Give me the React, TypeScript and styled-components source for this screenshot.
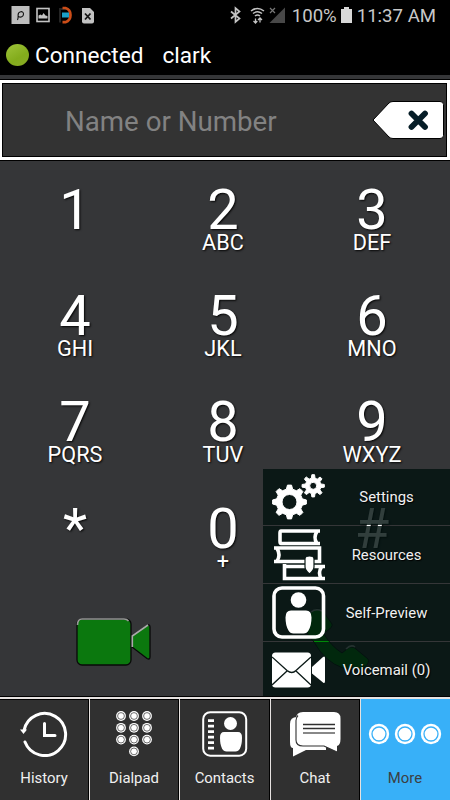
import React from "react";
import styled, { createGlobalStyle, css } from "styled-components";

const Global = createGlobalStyle`
  * { box-sizing: border-box; }
  body { margin: 0; background: #000; font-family: Roboto, "Liberation Sans", sans-serif; }
  svg { display: block; flex: none; }
`;

const Screen = styled.div`
  position: relative;
  width: 450px;
  height: 800px;
  overflow: hidden;
  display: flex;
  flex-direction: column;
  background: #353638;
  color: #fff;
`;

const StatusBar = styled.div`
  height: 32px;
  flex: none;
  background: #000;
  display: flex;
  align-items: center;
  justify-content: space-between;
  padding: 0 14px 2px 11px;
`;

const StatusIcons = styled.div`
  display: flex;
  align-items: center;
`;

const StatusText = styled.span<{ $gap: number }>`
  color: #c8c8c8;
  font-size: 18.6px;
  line-height: 32px;
  margin-left: ${(p) => p.$gap}px;
  white-space: nowrap;
  padding-top: 2px;
`;

const TitleBar = styled.div`
  height: 43px;
  flex: none;
  background: #000;
  display: flex;
  align-items: center;
  padding: 5px 0 0 6px;
  font-size: 22.6px;
  line-height: 28px;
`;

const Presence = styled.span`
  width: 23px;
  height: 22px;
  margin: 0 6px 2px 0;
  border-radius: 50%;
  background: linear-gradient(150deg, #9fc43a, #83ac1c 60%, #8aab25);
`;

const Account = styled.span`
  margin-left: 19px;
`;

const Field = styled.div`
  height: 80px;
  flex: none;
  margin-top: 5px;
  border: solid #fff;
  border-width: 3px 3px 3px 2px;
  outline: 1px solid #000;
  box-shadow: inset 0 0 0 1px #000;
  background: #333;
  display: flex;
  align-items: center;
  justify-content: space-between;
  padding: 0 2px 0 63px;
`;

const Placeholder = styled.span`
  color: #828282;
  font-size: 27.7px;
  line-height: 34px;
  padding-top: 3px;
`;

const Keypad = styled.div`
  flex: none;
  display: grid;
  grid-template-columns: 150px 146px 152px;
  grid-auto-rows: 106.2px;
`;

const Key = styled.div`
  display: flex;
  flex-direction: column;
  align-items: center;
  padding-top: 30px;
  text-shadow: 1px 1px 2px rgba(0, 0, 0, 0.9);
`;

const Digit = styled.span`
  font-size: 56px;
  line-height: 41px;
`;

const Letters = styled.span`
  font-size: 21.7px;
  line-height: 23px;
`;

const Calls = styled.div`
  display: flex;
  padding: 32px 0 0 76px;
  gap: 150px;
  height: 112px;
  flex: none;
`;

const PhoneWrap = styled.div`
  margin-top: -9px;
`;

const Menu = styled.div`
  position: absolute;
  left: 263px;
  right: 0;
  top: 469px;
  height: 228px;
  display: grid;
  grid-template-rows: 56px 57px 57px 55px;
  row-gap: 1px;
`;

const MenuItem = styled.div`
  background: rgba(1, 17, 15, 0.81);
  display: grid;
  grid-template-columns: 55px 119px;
  align-items: center;
  padding-left: 9px;
  text-align: center;
  font-size: 14.9px;
  color: #f1f1f1;
  text-shadow: 1px 1px 1px #000;
`;

const NavBar = styled.div`
  position: absolute;
  left: 0;
  right: 0;
  bottom: 0;
  height: 104px;
  border-top: 1px solid #000;
  background: #e6e2e0;
  display: grid;
  grid-template-columns: 89px 89px 90px 89px 89px;
  column-gap: 1px;
  padding-top: 2px;
`;

const Tab = styled.div<{ $active?: boolean }>`
  display: flex;
  flex-direction: column;
  align-items: center;
  border: solid #000;
  border-width: 1px 1px 0 0;
  background: #303030;
  font-size: 14.9px;
  color: #f0f0f0;
  ${(p) =>
    p.$active &&
    css`
      background: #38b0f8;
      color: #3c4043;
      border-color: #38b0f8;
    `}
`;

const TabIcon = styled.div`
  height: 67px;
  display: flex;
  align-items: center;
`;

const TabLabel = styled.span`
  line-height: 22px;
`;

const NotificationIcons = () => (
  <svg width="86" height="20" viewBox="0 0 86 20">
    <rect x="0.5" y="1" width="18" height="18" fill="#bdbdbd" />
    <path d="M6.500 15c1-2 .6-4 .6-5 0-4 5.400-4.500 5.400-1 0 2.800-3 3.800-5 2.500" fill="none" stroke="#111" strokeWidth="1.100" />
    <rect x="26" y="3.500" width="12" height="13" fill="none" stroke="#c4c4c4" strokeWidth="1.600" />
    <path d="M27.500 13.500v-3l2-1 1.500 1 1.500-2.500 2 2.500 2 .5v2.500z" fill="#c4c4c4" />
    <path d="M49 17.500V4h7" fill="none" stroke="#252525" strokeWidth="2" />
    <path d="M51.500 3h3q5 1.500 5 7t-5 7.200h-3" fill="none" stroke="#cc4d18" strokeWidth="2.700" />
    <path d="M51 7.500h7v5h-7z" fill="#1ba0c8" />
    <path d="M71 3h8l4 4v9.500q0 2-2 2h-8q-2 0-2-2z" fill="#c2c2c2" />
    <path d="M74 8.500l5.500 6m0-6l-5.500 6" stroke="#151515" strokeWidth="1.800" />
  </svg>
);

const SignalIcons = () => (
  <svg width="56" height="20" viewBox="0 0 56 20">
    <path d="M1 6.500l8.500 7-4 3.500V3l4 3.500L1 13.500" fill="none" stroke="#c4c4c4" strokeWidth="1.700" />
    <g fill="none" stroke="#c4c4c4" strokeWidth="1.500">
      <path d="M21 6q6.500-5 13 0M23 8.500q4.500-3.500 9 0M25 11q2.500-2 5 0" />
      <path d="M25.500 18v-4.500M30 13v4.500M23.500 16l2 2 1.800-2M28 15l2-2 2 2" strokeWidth="1.300" />
    </g>
    <path d="M55 2.500V18H39.500z" fill="#484848" />
    <path d="M40 3l5 5m0-5l-5 5" stroke="#777" strokeWidth="1.200" />
  </svg>
);

const Battery = () => (
  <svg width="15" height="16" viewBox="-4 0 15 16">
    <path d="M0 2h3V0h5v2h3v14H0z" fill="#d8d8d8" />
  </svg>
);

const Backspace = () => (
  <svg width="73" height="40" viewBox="0 0 73 40">
    <path d="M1 20L17 3q1.500-1.500 4-1.500h47q3.500 0 3.500 3v31q0 3-3.500 3H21q-2.500 0-4-1.500z" fill="#fff" stroke="#000" strokeWidth="1" />
    <path d="M39.500 13.500L53 27M53 13.500L39.500 27" stroke="#061d27" strokeWidth="5.800" strokeLinecap="round" />
  </svg>
);

const VideoCall = () => (
  <svg width="77" height="50" viewBox="0 0 77 50">
    <rect x="1" y="2" width="54" height="46" rx="5" fill="#0b780e" stroke="#090909" strokeWidth="1.300" />
    <path d="M1.500 8Q1.500 2 6 2H48q3 0 4.500 2" fill="none" stroke="#999" strokeWidth="1.600" />
    <path d="M56 19L71 8.500q3-1.500 3 1.500v30q0 3-3 1.500L56 30z" fill="#0b780e" stroke="#090909" strokeWidth="1.300" />
    <path d="M56.300 30V19L72 8" fill="none" stroke="#aaa" strokeWidth="1.600" />
  </svg>
);

const VoiceCall = () => (
  <svg width="68" height="64" viewBox="0 0 68 64">
    <path d="M3 20C3 8 8 1 16 1Q20 1 22 6L29 16Q30 19 24 23L21 26Q28 38 39 45L44 41Q49 37 53 41L65 51Q67 54 62 59Q55 64 40 60Q22 54 11 34Q3 26 3 20Z" fill="#008b08" stroke="#111" />
    <path d="M8 4q5-4 11-1M43 41q5-5 9-2" fill="none" stroke="#bbb" strokeWidth="1.500" />
  </svg>
);

const gearPath = (cx: number, cy: number, outer: number, inner: number) => {
  const at = (r: number, a: number) =>
    `${(cx + r * Math.cos(a)).toFixed(2)} ${(cy + r * Math.sin(a)).toFixed(2)}`;
  const points: string[] = [];
  for (let i = 0; i < 8; i++) {
    const a = (i * Math.PI) / 4;
    points.push(at(inner, a - 0.24), at(outer, a - 0.12), at(outer, a + 0.12), at(inner, a + 0.24));
  }
  return `M${points.join("L")}Z`;
};

const Gears = () => (
  <svg width="54" height="48" viewBox="0 0 54 48">
    <path
      fillRule="evenodd"
      d={`${gearPath(17.5, 29, 17, 13.2)}M10 29a7.500 7.500 0 1 0 15 0a7.500 7.500 0 1 0-15 0Z`}
      fill="#fff"
      stroke="#fff"
      strokeLinejoin="round"
    />
    <path
      fillRule="evenodd"
      d={`${gearPath(41.2, 12.8, 11.2, 7.8)}M37.700 12.800a3.500 3.500 0 1 0 7 0a3.500 3.500 0 1 0-7 0Z`}
      fill="#fff"
      stroke="#fff"
      strokeLinejoin="round"
    />
  </svg>
);

const Books = () => (
  <svg width="54" height="54" viewBox="0 0 54 54">
    <g fill="none" stroke="#fff" strokeWidth="3.600">
      <path d="M48 3H9q-1 0-1 2v8q0 2.500 1 2.500h39M45 3.500q-4 6 0 12" />
      <path d="M2 20H47.500V33.500H2M5 20.500q4 6.500 0 12.500" />
      <path d="M12.500 36v14.500H53M13 38.500h40M49.500 39q-4 6 0 12" />
    </g>
    <path d="M33 31q0-3 4.500-3t4.500 3v8q0 3-4.500 7q-4.500-4-4.500-7z" fill="#fff" stroke="#0b1917" strokeWidth="1.200" />
  </svg>
);

const Person = () => (
  <svg width="54" height="54" viewBox="0 0 54 54">
    <rect x="2" y="2" width="49.500" height="49" rx="8" fill="none" stroke="#fff" strokeWidth="3.600" />
    <circle cx="26.500" cy="14" r="7.800" fill="#fff" />
    <path d="M19 24.500h15q5.500 0 5.500 7 0 8-3 13-1.500 3-5 3H21.500q-3.500 0-5-3-3-5-3-13 0-7 5.500-7z" fill="#fff" />
  </svg>
);

const VideoMail = () => (
  <svg width="54" height="36" viewBox="0 0 54 36">
    <rect x="0" y="0.500" width="39" height="35" rx="3.500" fill="#fff" />
    <path d="M0 5l15 13.500q5 4 9 0L39 5M0 33l15-14M39 33L24 19" fill="none" stroke="#0b1917" strokeWidth="1.300" />
    <path d="M40 15L51 5q2-1.500 2 1v23q0 3-2 1.500L40 21.500z" fill="#fff" />
  </svg>
);

const HistoryIcon = () => (
  <svg width="48" height="46" viewBox="0 0 48 46">
    <path d="M4 19.500A21 21 0 1 1 5 31" fill="none" stroke="#fff" strokeWidth="3" strokeLinecap="round" />
    <path d="M0 18.500h7L3.500 23z" fill="#fff" />
    <path d="M24.500 12.500V24.500H35" fill="none" stroke="#fff" strokeWidth="3" strokeLinecap="round" />
  </svg>
);

const dots = [0, 1, 2, 3, 4, 5, 6, 7, 8, 10];

const DialpadIcon = () => (
  <svg width="38" height="46" viewBox="0 0 38 46">
    {dots.map((n) => (
      <g key={n} transform={`translate(${6 + (n % 3) * 13} ${5 + Math.floor(n / 3) * 11.8})`}>
        <circle r="4.900" fill="#fff" />
        <circle r="3.400" fill="none" stroke="#303030" strokeWidth="0.700" />
      </g>
    ))}
  </svg>
);

const ContactsIcon = () => (
  <svg width="46" height="46" viewBox="0 0 46 46">
    <rect x="1.200" y="1.200" width="43" height="43.500" rx="7" fill="none" stroke="#fff" strokeWidth="2" />
    <path d="M9 8.200v31" stroke="#fff" strokeWidth="6" strokeDasharray="2.800 2.700" />
    <circle cx="28.500" cy="12.500" r="6.500" fill="#fff" />
    <path d="M22 21h14q4 0 4 5.500 0 7-2 11-1.500 3-4.500 3h-9q-3 0-4.500-3-2-4-2-11 0-5.500 4-5.500z" fill="#fff" />
  </svg>
);

const ChatIcon = () => (
  <svg width="52" height="46" viewBox="0 0 52 46">
    <path d="M8 6Q1 6 1 13v18q0 6 3 6v8.500L17 39h20V6z" fill="#fff" />
    <path d="M14 1h31q6.500 0 6.500 6.500V28q0 6-3.500 7v6L35 35H14q-7 0-7-7V8q0-7 7-7z" fill="#fff" />
    <path d="M9 4.500q-2 2-2 5V29q0 6 7 6h21l13 6" fill="none" stroke="#303030" strokeWidth="1.100" />
    <path d="M14 13.500h32M14 17.500h32" stroke="#303030" strokeWidth="1.300" />
    <path d="M14 22h32" stroke="#888" strokeWidth="2" />
  </svg>
);

const MoreIcon = () => (
  <svg width="74" height="24" viewBox="0 0 74 24">
    {[11, 37, 63].map((x) => (
      <g key={x}>
        <circle cx={x} cy="12" r="10.200" fill="#fff" />
        <circle cx={x} cy="12" r="7" fill="none" stroke="#38b0f8" strokeWidth="1.300" />
      </g>
    ))}
  </svg>
);

const keys: [string, string][] = [
  ["1", ""], ["2", "ABC"], ["3", "DEF"],
  ["4", "GHI"], ["5", "JKL"], ["6", "MNO"],
  ["7", "PQRS"], ["8", "TUV"], ["9", "WXYZ"],
  ["*", ""], ["0", "+"], ["#", ""],
];

const menu = [
  { label: "Settings", icon: <Gears /> },
  { label: "Resources", icon: <Books /> },
  { label: "Self-Preview", icon: <Person /> },
  { label: "Voicemail (0)", icon: <VideoMail /> },
];

const tabs = [
  { label: "History", icon: <HistoryIcon /> },
  { label: "Dialpad", icon: <DialpadIcon /> },
  { label: "Contacts", icon: <ContactsIcon /> },
  { label: "Chat", icon: <ChatIcon /> },
  { label: "More", icon: <MoreIcon />, active: true },
];

export default function App() {
  return (
    <>
      <Global />
      <Screen>
        <StatusBar>
          <StatusIcons><NotificationIcons /></StatusIcons>
          <StatusIcons>
            <SignalIcons />
            <StatusText $gap={6}>100%</StatusText>
            <Battery />
            <StatusText $gap={5}>11:37 AM</StatusText>
          </StatusIcons>
        </StatusBar>
        <TitleBar>
          <Presence />
          <span>Connected</span>
          <Account>clark</Account>
        </TitleBar>
        <Field>
          <Placeholder>Name or Number</Placeholder>
          <Backspace />
        </Field>
        <Keypad>
          {keys.map(([digit, letters]) => (
            <Key key={digit}>
              <Digit>{digit}</Digit>
              {letters && <Letters>{letters}</Letters>}
            </Key>
          ))}
        </Keypad>
        <Calls>
          <VideoCall />
          <PhoneWrap><VoiceCall /></PhoneWrap>
        </Calls>
        <Menu>
          {menu.map((m) => (
            <MenuItem key={m.label}>
              {m.icon}
              <span>{m.label}</span>
            </MenuItem>
          ))}
        </Menu>
        <NavBar>
          {tabs.map((t) => (
            <Tab key={t.label} $active={t.active}>
              <TabIcon>{t.icon}</TabIcon>
              <TabLabel>{t.label}</TabLabel>
            </Tab>
          ))}
        </NavBar>
      </Screen>
    </>
  );
}
